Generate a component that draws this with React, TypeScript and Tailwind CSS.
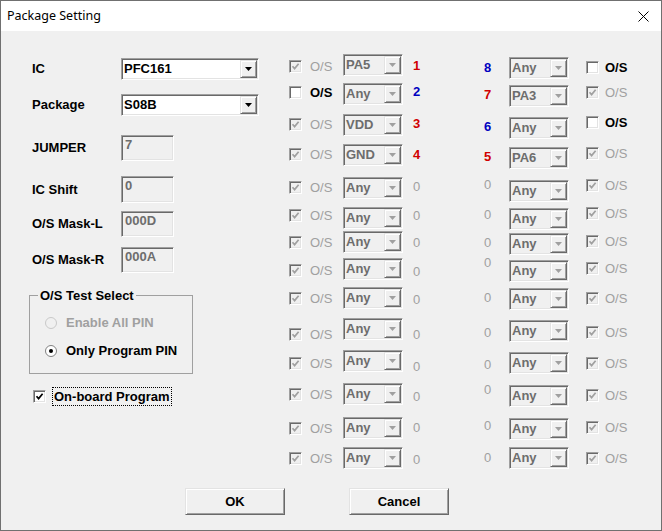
import type { ReactNode } from "react";

const sunken =
  "border border-t-[#a0a0a0] border-l-[#a0a0a0] border-b-white border-r-white shadow-[inset_1px_1px_0_#696969,inset_-1px_-1px_0_#e3e3e3]";
const raised =
  "border border-t-[#e3e3e3] border-l-[#e3e3e3] border-b-[#696969] border-r-[#696969] shadow-[inset_1px_1px_0_#ffffff,inset_-1px_-1px_0_#a0a0a0]";

type Pin = {
  h: string;
  cm: string;
  nm: string;
  val: string;
  num: string;
  tone: "red" | "blue" | "gray";
  on: boolean;
};

const leftPins: Pin[] = [
  { h: "h-[29px]", cm: "mt-[6px]", nm: "mt-[5px]", val: "PA5", num: "1", tone: "red", on: true },
  { h: "h-[31px]", cm: "mt-[3px]", nm: "mt-[2px]", val: "Any", num: "2", tone: "blue", on: false },
  { h: "h-[30px]", cm: "mt-[4px]", nm: "mt-[3px]", val: "VDD", num: "3", tone: "red", on: true },
  { h: "h-[33px]", cm: "mt-[4px]", nm: "mt-[4px]", val: "GND", num: "4", tone: "red", on: true },
  { h: "h-[30px]", cm: "mt-[4px]", nm: "mt-[3px]", val: "Any", num: "0", tone: "gray", on: true },
  { h: "h-[24px]", cm: "mt-[2px]", nm: "mt-[2px]", val: "Any", num: "0", tone: "gray", on: true },
  { h: "h-[27px]", cm: "mt-[5px]", nm: "mt-[5px]", val: "Any", num: "0", tone: "gray", on: true },
  { h: "h-[29px]", cm: "mt-[6px]", nm: "mt-[7px]", val: "Any", num: "0", tone: "gray", on: true },
  { h: "h-[31px]", cm: "mt-[5px]", nm: "mt-[6px]", val: "Any", num: "0", tone: "gray", on: true },
  { h: "h-[32px]", cm: "mt-[10px]", nm: "mt-[10px]", val: "Any", num: "0", tone: "gray", on: true },
  { h: "h-[33px]", cm: "mt-[7px]", nm: "mt-[10px]", val: "Any", num: "0", tone: "gray", on: true },
  { h: "h-[34px]", cm: "mt-[5px]", nm: "mt-[7px]", val: "Any", num: "0", tone: "gray", on: true },
  { h: "h-[30px]", cm: "mt-[5px]", nm: "mt-[4px]", val: "Any", num: "0", tone: "gray", on: true },
  { h: "h-[22px]", cm: "mt-[5px]", nm: "mt-[6px]", val: "Any", num: "0", tone: "gray", on: true },
];

const rightPins: Pin[] = [
  { h: "h-[28px]", cm: "mt-[4px]", nm: "mt-[4px]", val: "Any", num: "8", tone: "blue", on: false },
  { h: "h-[32px]", cm: "mt-[1px]", nm: "mt-[3px]", val: "PA3", num: "7", tone: "red", on: true },
  { h: "h-[30px]", cm: "-mt-[1px]", nm: "mt-[3px]", val: "Any", num: "6", tone: "blue", on: false },
  { h: "h-[33px]", cm: "mt-0", nm: "mt-[3px]", val: "PA6", num: "5", tone: "red", on: true },
  { h: "h-[28px]", cm: "-mt-[1px]", nm: "-mt-[2px]", val: "Any", num: "0", tone: "gray", on: true },
  { h: "h-[25px]", cm: "-mt-[1px]", nm: "mt-0", val: "Any", num: "0", tone: "gray", on: true },
  { h: "h-[27px]", cm: "mt-[2px]", nm: "mt-[3px]", val: "Any", num: "0", tone: "gray", on: true },
  { h: "h-[28px]", cm: "mt-[2px]", nm: "-mt-[4px]", val: "Any", num: "0", tone: "gray", on: true },
  { h: "h-[32px]", cm: "mt-[4px]", nm: "mt-[3px]", val: "Any", num: "0", tone: "gray", on: true },
  { h: "h-[32px]", cm: "mt-[6px]", nm: "mt-[6px]", val: "Any", num: "0", tone: "gray", on: true },
  { h: "h-[33px]", cm: "mt-[5px]", nm: "mt-[6px]", val: "Any", num: "0", tone: "gray", on: true },
  { h: "h-[33px]", cm: "mt-[4px]", nm: "-mt-[2px]", val: "Any", num: "0", tone: "gray", on: true },
  { h: "h-[29px]", cm: "mt-[3px]", nm: "mt-[1px]", val: "Any", num: "0", tone: "gray", on: true },
  { h: "h-[22px]", cm: "mt-[5px]", nm: "mt-[4px]", val: "Any", num: "0", tone: "gray", on: true },
];

const toneClass = {
  red: "font-bold text-[#d00000]",
  blue: "font-bold text-[#0000c0]",
  gray: "text-[#a0a0a0]",
};

function Arrow({ disabled }: { disabled?: boolean }) {
  return (
    <span className={`flex w-[17px] shrink-0 items-center justify-center bg-[#f0f0f0] ${raised}`}>
      <svg width="7" height="4" viewBox="0 0 7 4">
        <path d="M0 0 H7 L3.5 4 Z" fill={disabled ? "#a0a0a0" : "#000"} />
      </svg>
    </span>
  );
}

function Combo({ value, width, disabled }: { value: string; width: string; disabled?: boolean }) {
  return (
    <div className={`flex h-[22px] shrink-0 p-px ${width} ${sunken} ${disabled ? "bg-[#f0f0f0]" : "bg-white"}`}>
      <span
        className={`flex-1 pl-px text-[13px] leading-[18px] font-bold ${disabled ? "text-[#6d6d6d]" : "text-black"}`}
      >
        {value}
      </span>
      <Arrow disabled={disabled} />
    </div>
  );
}

function CheckBox({ checked, disabled }: { checked: boolean; disabled?: boolean }) {
  return (
    <span
      className={`flex h-[13px] w-[13px] shrink-0 items-center justify-center ${sunken} ${disabled ? "bg-[#f0f0f0]" : "bg-white"}`}
    >
      {checked && (
        <svg width="9" height="9" viewBox="0 0 9 9">
          <path d="M1.5 4.2 L3.6 6.6 L7.6 1.8" fill="none" stroke={disabled ? "#a0a0a0" : "#000"} strokeWidth="1.7" />
        </svg>
      )}
    </span>
  );
}

function Radio({ selected, disabled }: { selected: boolean; disabled?: boolean }) {
  return (
    <svg width="12" height="12" viewBox="0 0 12 12" className="shrink-0">
      <circle cx="6" cy="6" r="5.5" fill={disabled ? "#f0f0f0" : "#fff"} stroke={disabled ? "#c8c8c8" : "#808080"} />
      {selected && <circle cx="6" cy="6" r="2" fill="#000" />}
    </svg>
  );
}

function Field({ label, top, height, children }: { label: string; top: string; height: string; children: ReactNode }) {
  return (
    <div className={`flex items-center pl-[3px] ${top} ${height}`}>
      <span className="w-[89px] text-[13px] font-bold text-black">{label}</span>
      {children}
    </div>
  );
}

function Edit({ value }: { value: string }) {
  return (
    <div className={`h-full w-[53px] bg-[#f0f0f0] px-[3px] pt-[2px] ${sunken}`}>
      <span className="block text-[13px] leading-[13px] font-bold text-[#6d6d6d]">{value}</span>
    </div>
  );
}

function OsLabel({ on }: { on: boolean }) {
  return (
    <span className={`text-[13px] leading-[13px] ${on ? "text-[#a0a0a0]" : "font-bold text-black"}`}>O/S</span>
  );
}

export default function App() {
  return (
    <div className="h-[531px] w-[662px] overflow-hidden border border-[#707070] bg-[#f0f0f0] [font-family:'Liberation_Sans',Arial,sans-serif]">
      <div className="flex h-[30px] items-center justify-between bg-white pr-[12px] pl-[6px]">
        <span className="text-[12.5px] text-black [font-family:'Noto_Sans',sans-serif]">Package Setting</span>
        <svg width="11" height="11" viewBox="0 0 11 11">
          <path d="M0.5 0.5 L10.5 10.5 M10.5 0.5 L0.5 10.5" stroke="#000" strokeWidth="1" />
        </svg>
      </div>

      <div className="flex items-start">
        {/* left settings */}
        <div className="flex w-[288px] shrink-0 flex-col pl-[28px]">
          <Field label="IC" top="mt-[27px]" height="h-[22px]">
            <Combo value="PFC161" width="w-[138px]" />
          </Field>
          <Field label="Package" top="mt-[14px]" height="h-[22px]">
            <Combo value="S08B" width="w-[138px]" />
          </Field>
          <Field label="JUMPER" top="mt-[19px]" height="h-[26px]">
            <Edit value="7" />
          </Field>
          <Field label="IC Shift" top="mt-[15px]" height="h-[27px]">
            <Edit value="0" />
          </Field>
          <Field label="O/S Mask-L" top="mt-[8px]" height="h-[26px]">
            <Edit value="000D" />
          </Field>
          <Field label="O/S Mask-R" top="mt-[10px]" height="h-[26px]">
            <Edit value="000A" />
          </Field>

          <fieldset className="mt-[15px] w-[164px] border border-[#a0a0a0] p-0">
            <legend className="ml-[8px] px-[2px] text-[13px] leading-[15px] font-bold text-black">O/S Test Select</legend>
            <div className="flex flex-col pt-[13px] pb-[15px] pl-[15px]">
              <div className="flex h-[14px] items-center gap-[9px]">
                <Radio selected={false} disabled />
                <span className="text-[13px] font-bold text-[#a0a0a0]">Enable All PIN</span>
              </div>
              <div className="mt-[14px] flex h-[14px] items-center gap-[9px]">
                <Radio selected />
                <span className="text-[13px] font-bold text-black">Only Program PIN</span>
              </div>
            </div>
          </fieldset>

          <div className="mt-[13px] flex h-[19px] items-center pl-[4px]">
            <CheckBox checked />
            <span className="ml-[6px] border border-dotted border-black px-px text-[13px] leading-[17px] font-bold text-black">
              On-board Program
            </span>
          </div>
        </div>

        {/* pins 1-4 side */}
        <div className="flex w-[195px] shrink-0 flex-col pt-[23px]">
          {leftPins.map((p, i) => (
            <div key={i} className={`flex items-start ${p.h}`}>
              <div className={`flex w-[54px] shrink-0 items-center gap-[8px] ${p.cm}`}>
                <CheckBox checked={p.on} disabled={p.on} />
                <OsLabel on={p.on} />
              </div>
              <Combo value={p.val} width="w-[60px]" disabled />
              <span className={`ml-[10px] text-[13px] leading-[14px] ${p.nm} ${toneClass[p.tone]}`}>{p.num}</span>
            </div>
          ))}
        </div>

        {/* pins 5-8 side */}
        <div className="flex flex-col pt-[26px]">
          {rightPins.map((p, i) => (
            <div key={i} className={`flex items-start ${p.h}`}>
              <span className={`w-[25px] shrink-0 text-[13px] leading-[14px] ${p.nm} ${toneClass[p.tone]}`}>{p.num}</span>
              <Combo value={p.val} width="w-[60px]" disabled />
              <div className={`ml-[17px] flex items-center gap-[6px] ${p.cm}`}>
                <CheckBox checked={p.on} disabled={p.on} />
                <OsLabel on={p.on} />
              </div>
            </div>
          ))}
        </div>
      </div>

      <div className="mt-[19px] flex gap-[64px] pl-[184px]">
        <button className={`h-[27px] w-[100px] bg-[#f0f0f0] text-[13px] font-bold text-black ${raised}`}>OK</button>
        <button className={`h-[27px] w-[100px] bg-[#f0f0f0] text-[13px] font-bold text-black ${raised}`}>Cancel</button>
      </div>
    </div>
  );
}
